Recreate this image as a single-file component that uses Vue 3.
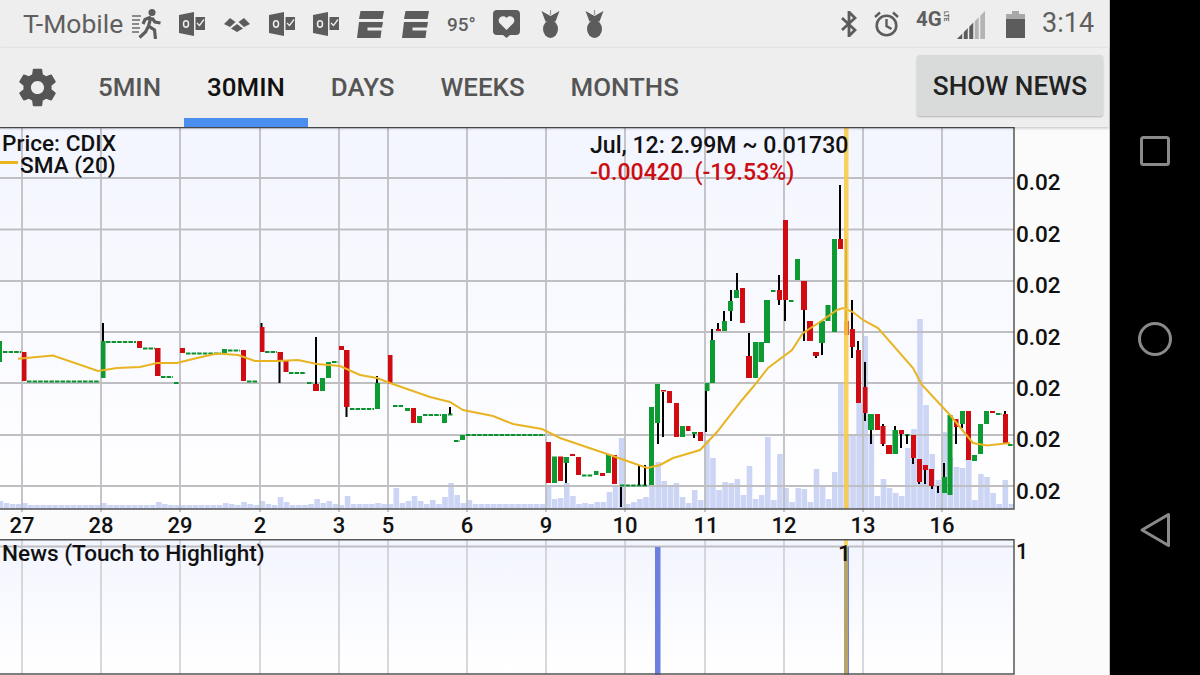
<template>
  <div class="phone">
    <div class="screen">
      <div class="status">
        <span class="carrier">T-Mobile</span>
        <svg class="ic" width="29" height="30" viewBox="0 0 29 30">
          <circle cx="20" cy="3.500" r="3.500" fill="#5c5c5c" />
          <path d="M19 8l-6 2.500-2 4.500M19 8l-2.500 9 6 4 1 9M16.500 17l-3 6-6 5.500M20 9l3 4 5.500 1" fill="none" stroke="#5c5c5c" stroke-width="3.200" />
          <path d="M0 7h9M0 11h8M0 15h7M0 19h8M0 23h7" fill="none" stroke="#8a8a8a" stroke-width="1.800" />
        </svg>
        <svg class="ic" width="26" height="24" viewBox="0 0 26 24"><use href="#outlook" /></svg>
        <svg class="ic" width="28" height="16" viewBox="0 0 28 16">
          <path d="M1 8l6-6 5.500 4L7 11zM27 8l-6-6-5.500 4L21 11zM14 8l6 4.500-6 3.500-6-3.500z" fill="#5c5c5c" />
        </svg>
        <svg class="ic" width="26" height="24" viewBox="0 0 26 24"><use href="#outlook" /></svg>
        <svg class="ic" width="26" height="24" viewBox="0 0 26 24"><use href="#outlook" /></svg>
        <svg class="ic" width="27" height="27" viewBox="0 0 27 27"><use href="#espn" /></svg>
        <svg class="ic" width="27" height="27" viewBox="0 0 27 27"><use href="#espn" /></svg>
        <span class="temp">95°</span>
        <svg class="ic" width="27" height="28" viewBox="0 0 27 28">
          <path d="M4 0h19a4 4 0 0 1 4 4v17a4 4 0 0 1-4 4h-6l-3.500 3-3.500-3H4a4 4 0 0 1-4-4V4a4 4 0 0 1 4-4z" fill="#5c5c5c" />
          <path d="M13.500 20l-7-7a4.200 4.200 0 0 1 7-5 4.200 4.200 0 0 1 7 5z" fill="#eee" />
        </svg>
        <svg class="ic" width="26" height="28" viewBox="0 0 26 28"><use href="#bomb" /></svg>
        <svg class="ic" width="26" height="28" viewBox="0 0 26 28"><use href="#bomb" /></svg>

        <div class="status-right">
          <svg class="ic" width="16" height="26" viewBox="0 0 16 26">
            <path d="M1 7l13 12-6 6V1l6 6L1 19" fill="none" stroke="#5c5c5c" stroke-width="2.800" />
          </svg>
          <svg class="ic" width="25" height="26" viewBox="0 0 25 26">
            <circle cx="12.500" cy="14.500" r="9.800" fill="none" stroke="#5c5c5c" stroke-width="2.600" />
            <path d="M12.500 8v7l5 3M1 6l5-4.500M24 6l-5-4.500" fill="none" stroke="#5c5c5c" stroke-width="2.400" />
          </svg>
          <div class="net">
            <span class="net-g">4G</span>
            <span class="net-lte">LTE</span>
          </div>
          <svg class="ic signal" width="28" height="28" viewBox="0 0 28 28">
            <path d="M0 28L28 0v28z" fill="#b4b4b4" />
            <path d="M0 28l17-17v17z" fill="#5c5c5c" />
            <path d="M6 18v10M11.500 13v15M17 8v20M22.500 3v25" fill="none" stroke="#eee" stroke-width="1.500" />
          </svg>
          <svg class="ic batt" width="19" height="27" viewBox="0 0 19 27">
            <path d="M6 0h7v3h6v24H0V3h6z" fill="#5c5c5c" />
            <path d="M6 0h7v3h6v5H0V3h6z" fill="#a8a8a8" />
          </svg>
          <span class="clock">3:14</span>
        </div>
      </div>

      <div class="toolbar">
        <div class="gear-box">
          <svg width="45" height="45" viewBox="0 0 24 24">
            <path fill="#555" d="M19.430 12.980c.040-.320.070-.640.070-.980s-.030-.660-.070-.980l2.110-1.650c.190-.150.240-.420.120-.640l-2-3.460c-.120-.220-.390-.300-.610-.220l-2.490 1c-.520-.400-1.080-.730-1.690-.980l-.380-2.650C14.460 2.180 14.250 2 14 2h-4c-.250 0-.460.180-.490.420l-.380 2.650c-.610.250-1.170.590-1.690.980l-2.490-1c-.230-.090-.490 0-.610.220l-2 3.460c-.130.220-.070.490.120.640l2.110 1.650c-.040.320-.070.650-.070.980s.030.660.070.980l-2.110 1.650c-.190.150-.240.420-.120.640l2 3.460c.120.220.390.300.610.220l2.490-1c.520.400 1.080.730 1.690.980l.380 2.650c.030.240.240.420.490.420h4c.250 0 .460-.180.490-.420l.380-2.650c.610-.250 1.170-.590 1.690-.980l2.490 1c.230.090.490 0 .610-.220l2-3.460c.120-.220.070-.490-.120-.640l-2.110-1.650zM12 15.500c-1.930 0-3.500-1.570-3.500-3.500s1.570-3.500 3.500-3.500 3.500 1.570 3.500 3.500-1.570 3.500-3.500 3.500z" />
          </svg>
        </div>
        <div v-for="t in tabs" :key="t" class="tab" :class="{ active: t === '30MIN' }">{{ t }}</div>
        <button class="news-btn">SHOW NEWS</button>
      </div>

      <svg class="price" width="1109" height="412" viewBox="0 127 1109 412">
        <defs>
          <linearGradient id="fade" x1="0" y1="0" x2="0" y2="1">
            <stop offset="0" stop-color="#f3f5ff" />
            <stop offset="1" stop-color="#ffffff" />
          </linearGradient>
        </defs>
        <rect x="0" y="127" width="1109" height="412" fill="#fbfbfb" />
        <rect x="0" y="127" width="1014" height="382" fill="url(#fade)" />

        <rect v-for="(top, i) in volumes" :key="'v' + i" :x="i * 6.09 - 2.36" :y="top" width="5.6" :height="509 - top" fill="#cdd5f5" />

        <path v-for="x in gridX" :key="'gx' + x" :d="`M${x} 127V512`" stroke="#bfbfc3" stroke-width="1.800" />
        <path v-for="y in gridY" :key="'gy' + y" :d="`M0 ${y}H1014`" stroke="#bfbfc3" stroke-width="1.800" />

        <path v-for="(d, i) in dashes" :key="'d' + i" :d="`M${d[0]} ${d[2]}H${d[1]}`" stroke="#0c8f2e" stroke-width="2" stroke-dasharray="4.500 1.100" />
        <path v-for="(w, i) in wicks" :key="'w' + i" :d="`M${w[0]} ${w[1]}V${w[2]}`" stroke="#000" stroke-width="2" />
        <rect v-for="(c, i) in candles" :key="'c' + i" :x="c[0]" :y="c[2]" :width="c[1] - c[0]" :height="c[3] - c[2]" :fill="c[4] ? '#0d9a33' : '#d00b12'" />

        <polyline :points="sma" fill="none" stroke="#e8b422" stroke-width="2" />
        <rect x="844" y="127" width="4.500" height="382" fill="#f8cb48" fill-opacity="0.88" />

        <path d="M0 127.500H1014V509H0" fill="none" stroke="#555" stroke-width="1.500" />

        <text class="lbl" x="2" y="151">Price: CDIX</text>
        <rect x="0" y="161" width="18" height="3" fill="#e8b422" />
        <text class="lbl" x="20" y="173">SMA (20)</text>
        <text class="lbl wide" x="590" y="153">Jul, 12: 2.99M ~ 0.01730</text>
        <text class="lbl wide red" x="590" y="180">{{ change }}</text>

        <text v-for="y in priceY" :key="'p' + y" class="lbl axis" x="1016" :y="y">0.02</text>
        <text v-for="l in dayLabels" :key="'l' + l[0]" class="day" :x="l[1]" y="533" text-anchor="middle">{{ l[0] }}</text>
      </svg>

      <svg class="news" width="1109" height="136" viewBox="0 539 1109 136">
        <rect x="0" y="539" width="1109" height="136" fill="#fbfbfb" />
        <rect x="0" y="540" width="1014" height="134" fill="url(#fade)" />
        <path v-for="x in gridX" :key="'nx' + x" :d="`M${x} 540V674`" stroke="#c4c4c8" stroke-width="1.300" />
        <path d="M0 546.500H1014" stroke="#c0c0c4" stroke-width="1.800" />
        <rect x="655" y="547" width="5.500" height="128" fill="#6d7fe0" />
        <rect x="844" y="547" width="5" height="128" fill="#6d7fe0" />
        <rect x="844" y="547" width="4" height="128" fill="#b7a468" />
        <rect x="844" y="540" width="4" height="6" fill="#f8d964" />
        <path d="M0 539.700H1014V674H0" fill="none" stroke="#555" stroke-width="1.500" />
        <text class="lbl" x="2" y="561">News (Touch to Highlight)</text>
        <text class="lbl" x="838" y="561">1</text>
        <text class="lbl small" x="1016" y="559">1</text>
      </svg>
    </div>

    <div class="nav">
      <svg width="30" height="30" viewBox="0 0 30 30">
        <rect x="1.500" y="1.500" width="27" height="27" rx="2" fill="none" stroke="#8a8a8a" stroke-width="3" />
      </svg>
      <svg width="36" height="36" viewBox="0 0 36 36">
        <circle cx="18" cy="18" r="15.500" fill="none" stroke="#8a8a8a" stroke-width="3" />
      </svg>
      <svg width="32" height="36" viewBox="0 0 32 36">
        <path d="M29.500 2.500v31L3 18z" fill="none" stroke="#8a8a8a" stroke-width="3" stroke-linejoin="round" />
      </svg>
    </div>

    <svg class="symbols" width="0" height="0">
      <symbol id="outlook" viewBox="0 0 26 24">
        <path d="M0 3l15-3v24L0 21z" fill="#5c5c5c" />
        <ellipse cx="7" cy="12" rx="2.500" ry="3.200" fill="none" stroke="#eee" stroke-width="1.500" />
        <path d="M16.500 5H26v13h-9.500z" fill="#5c5c5c" />
        <path d="M18 11l2.500 2.500L25 7.500" fill="none" stroke="#eee" stroke-width="1.300" />
      </symbol>
      <symbol id="espn" viewBox="0 0 27 27">
        <path d="M3.500 0H27l-1.500 8H2zM2 11h24l-1 5.500H10.500v3H24.500L23.500 27H0z" fill="#5c5c5c" />
      </symbol>
      <symbol id="bomb" viewBox="0 0 26 28">
        <ellipse cx="12.500" cy="19" rx="7.500" ry="9" fill="#5c5c5c" />
        <path d="M3.500 1l9 5 9-5-4 10.500H7.500z" fill="#5c5c5c" />
        <path d="M12.500 0v5" stroke="#999" stroke-width="1.200" />
      </symbol>
    </svg>
  </div>
</template>

<script setup>
const tabs = ['5MIN', '30MIN', 'DAYS', 'WEEKS', 'MONTHS']

const change = '-0.00420\u00a0\u00a0(-19.53%)'

const gridX = [22, 101, 180, 260, 339, 388, 467, 546, 625, 705, 784, 863, 942]
const gridY = [178, 229.5, 281, 332, 383, 435, 486]
const priceY = [190, 242, 293, 345, 396, 447, 499]
const dayLabels = [
  ['27', 22], ['28', 101], ['29', 180], ['2', 260], ['3', 339], ['5', 388], ['6', 467],
  ['9', 546], ['10', 625], ['11', 706], ['12', 784], ['13', 863], ['16', 942]
]

// top of each volume bar, one per 30 minute slot
const low = (n) => Array(n).fill(505)
const volumes = [
  501, 503, 504, 504, 503, ...low(12), 503, ...low(8), 502, 504, 505, 505, 505, ...low(6),
  503, 504, 505, 502, 504, 505, 501, 504, 505, 497, 502, 505, 505, 505, 504, 499, 503, 501, 504, 505,
  496, 504, 504, 504, 504, 503, 504, 504, 488, 503, 501, 496, 501, 504, 500, 504, 497, 483, 495, 503, 500,
  ...Array(12).fill(504),
  485, 499, 498, 483, 496, 504, 503, 504, 502, 502, 492, 485, 438, 504, 502, 499, 497, 486, 462, 481, 486, 483, 497, 503,
  490, 500, 440, 458, 490, 482, 483, 479, 495, 466, 499, 495, 437, 500, 454, 488, 502, 488, 489, 502, 469, 486, 499, 472,
  383, 435, 435, 403, 336, 435, 496, 479, 488, 493, 496, 448, 429, 319, 405, 454, 480, 432, 457, 467, 468, 453, 500, 474, 477, 493, 504, 480, 504
]

// x0, x1, top, bottom, green?
const candles = [
  [0, 2, 341, 362, 1], [22, 26.5, 352, 381, 0], [101, 105.5, 341, 378, 1], [137, 142, 341, 348, 0],
  [155, 160.5, 348, 376, 0], [180, 185, 348, 353, 0], [222, 227, 349, 353, 1], [241, 246, 350, 381, 0],
  [260, 264.5, 327, 352, 0], [277.5, 283, 352, 360, 0], [283.5, 288.5, 361, 372, 0], [313, 319, 384, 391, 0],
  [320, 325, 378, 391, 1], [326, 331, 362, 378, 1], [339, 344, 346, 350, 0], [344, 349.5, 350, 407, 0],
  [375, 380, 383, 409, 1], [388, 392.5, 355, 384, 0], [405, 410, 408, 411, 1], [411, 416, 408, 423, 0],
  [417, 422, 416, 423, 1], [442, 447, 414, 423, 1], [460, 465, 435, 440, 1], [546, 551, 442, 483, 0],
  [552, 557, 456.5, 483, 1], [558, 563, 456.5, 481, 0], [563.5, 569, 457, 463, 1], [570, 575, 454, 456, 0],
  [576, 581, 457, 475, 0], [594, 598.5, 471, 475, 1], [600, 605, 473, 476, 0], [606, 611, 454, 473, 1],
  [612, 617, 455, 484, 0], [649, 654, 407, 485, 1], [655, 660, 384, 423, 1], [661, 666, 390, 391.5, 0],
  [667, 672, 391, 403, 0], [674, 679, 403, 437, 0], [680, 685, 426, 437, 1], [686, 690.5, 426, 431, 0],
  [692, 697, 432, 434, 1], [698, 703, 432, 441, 0], [705, 709.5, 383, 391, 1], [710, 715, 340, 383, 1],
  [716, 721, 329, 331, 0], [722, 727, 321, 331, 1], [728, 733, 301, 311, 1], [734, 739, 290, 298, 1],
  [740, 745, 288, 323, 0], [746, 752, 356, 378, 0], [753, 758, 342, 378, 1], [758.5, 764, 342, 362, 1],
  [764, 770, 300, 343, 1], [777, 782, 290, 300, 0], [783, 788, 220, 300, 0], [795, 800, 259, 280, 1],
  [801, 807, 281, 310, 0], [807, 813, 321, 341, 0], [813, 819, 352, 356, 0], [819, 825, 321, 343, 1],
  [825.5, 830.5, 305, 321, 1], [832, 837, 239, 332, 1], [838, 843, 239, 249, 0], [844, 849, 321, 335, 0],
  [850, 855, 329, 347, 0], [856, 861, 350, 403, 0], [863, 867.5, 387, 413, 0], [868, 874, 414, 430, 1],
  [875, 880, 414, 430, 0], [880.5, 885.5, 426, 444, 0], [886, 892, 445, 454, 0], [892.5, 898, 430, 454, 1],
  [899, 904, 430, 434, 0], [911, 916, 435, 458, 0], [917, 922, 459, 482, 0], [923, 928, 465, 470, 0],
  [929, 934, 469, 486, 0], [942, 947, 477, 493, 1], [947.5, 952.5, 415, 495, 1], [954, 958.5, 419, 427, 0],
  [960, 965, 411, 424, 1], [966, 971, 411, 460, 0], [972, 977, 455, 461, 1], [978, 983, 424, 454, 1],
  [984, 989, 411, 424, 1], [990, 995, 411, 413, 0], [1003, 1008, 414, 444, 0]
]

// x, y0, y1
const wicks = [
  [103, 323, 341], [261.5, 323, 327], [279.5, 360, 383], [316, 337, 384], [346.5, 407, 417], [377, 376, 383],
  [450, 407, 414], [566, 463, 483], [621, 487, 507], [639, 465, 485], [645, 465, 485], [658, 423, 444],
  [663, 392, 437], [694, 434, 438], [706, 391, 432], [712, 329, 340], [718, 323, 329], [724, 311, 321],
  [731, 290, 301], [731, 311, 321], [737, 273, 290], [749, 333, 356], [779, 275, 290], [779, 300, 305],
  [785, 300, 321], [804, 310, 341], [816, 356, 358], [822, 343, 355], [840, 185, 239], [846, 239, 322],
  [852, 300, 329], [852, 347, 358], [858, 341, 350], [865, 362, 387], [865, 413, 421], [871, 430, 444],
  [883, 424, 426], [883, 444, 446], [895, 426, 430], [901, 434, 448], [907, 435, 444], [913, 458, 464],
  [919, 482, 484], [925, 470, 484], [932, 486, 489], [938, 486, 493], [944, 463, 477], [956, 427, 444],
  [962, 424, 428], [1005, 411, 414]
]

// x0, x1, y of the flat sessions
const dashes = [
  [3, 21, 352], [27, 100, 381.5], [106, 136, 342], [143, 155, 348.5], [161, 173, 377], [174, 179, 383],
  [186, 221, 353.5], [228, 240, 350.5], [247, 258, 381.5], [265, 277, 352], [289, 306, 373], [307, 313, 383],
  [332, 338, 362], [350, 374, 409], [393, 404, 406], [423, 441, 415], [448, 453, 414.5], [454, 460, 441],
  [466, 545, 435], [582, 593, 475.5], [620, 648, 485.5], [771, 776, 291], [789, 794, 301], [905, 910, 435],
  [996, 1002, 414], [1008, 1014, 445]
]

const sma = '18,358.7 53,355.5 98,371 117,368 140,367 157,363 177,363 197,358 217,353.5 238,355 255,361 277,361 298,360 317,364 340,366 360,375 377,378 390,383 430,397 450,402 463,410 493,416 513,424 542,429 560,438 610,455 647,468 660,465 673,458 680,456 700,450 717,432 742,400 753,387 768,368 792,350 803,333 820,322 837,310 843,308 853,312 863,320 878,328 913,368 922,385 950,415 973,443 987,445.6 1010,443'
</script>

<style scoped>
.phone {
  display: flex;
  width: 1200px;
  height: 675px;
  overflow: hidden;
  font-family: Roboto, "Liberation Sans", sans-serif;
}
.screen {
  width: 1109px;
  display: flex;
  flex-direction: column;
}
.status {
  height: 48px;
  background: #eeeeee;
  display: flex;
  align-items: center;
  gap: 18px;
  padding-left: 23px;
  padding-right: 15px;
  box-sizing: border-box;
  color: #5f5f5f;
}
.carrier {
  width: 100px;
  margin-right: -9px;
  margin-bottom: 2px;
  font-size: 26.5px;
  white-space: nowrap;
}
.ic {
  flex: none;
  display: block;
}
.temp {
  width: 28px;
  font-size: 19px;
  font-weight: 500;
}
.status-right {
  margin-left: auto;
  display: flex;
  align-items: center;
  gap: 17px;
}
.net {
  display: flex;
  align-items: flex-start;
  width: 34px;
  height: 28px;
  margin-right: -10px;
}
.net-g {
  font-size: 20.5px;
  font-weight: 700;
  line-height: 18px;
}
.net-lte {
  writing-mode: vertical-rl;
  font-size: 6.5px;
  font-weight: 700;
  line-height: 8px;
  margin-top: 1px;
}
.signal {
  margin-top: 1px;
}
.batt {
  margin-left: 4px;
}
.clock {
  font-size: 27px;
  width: 52px;
  margin-bottom: 2px;
}
.toolbar {
  height: 79px;
  background: #eeeeee;
  display: flex;
  box-shadow: 0 1px 3px rgba(0, 0, 0, 0.25);
  position: relative;
  z-index: 1;
}
.gear-box {
  width: 75px;
  display: flex;
  align-items: center;
  justify-content: center;
}
.tab {
  padding: 0 23px;
  font-size: 25.9px;
  font-weight: 500;
  line-height: 79px;
  color: #555;
}
.tab.active {
  color: #111;
  box-shadow: inset 0 -9px 0 #4a8ff0;
}
.news-btn {
  margin: 7px 6px 0 auto;
  width: 186px;
  height: 61px;
  padding: 0;
  border: none;
  border-radius: 3px;
  background: #d9dbda;
  box-shadow: 0 1px 2px rgba(0, 0, 0, 0.25);
  font-family: inherit;
  font-size: 26.2px;
  font-weight: 500;
  color: #222;
}
.price,
.news {
  display: block;
  flex: none;
}
.lbl {
  font-size: 22.6px;
  font-weight: 500;
  fill: #111;
}
.wide {
  font-size: 23.1px;
}
.small {
  font-size: 21.5px;
}
.red {
  fill: #cc0d12;
}
.axis {
  font-size: 22.5px;
}
.day {
  font-size: 22px;
  font-weight: 500;
  fill: #111;
}
.nav {
  flex: 1;
  background: #000;
  border-left: 1px solid #c8c8c8;
  display: flex;
  flex-direction: column;
  align-items: center;
  padding-top: 136px;
  gap: 155px;
  box-sizing: border-box;
}
.symbols {
  position: absolute;
}
</style>
